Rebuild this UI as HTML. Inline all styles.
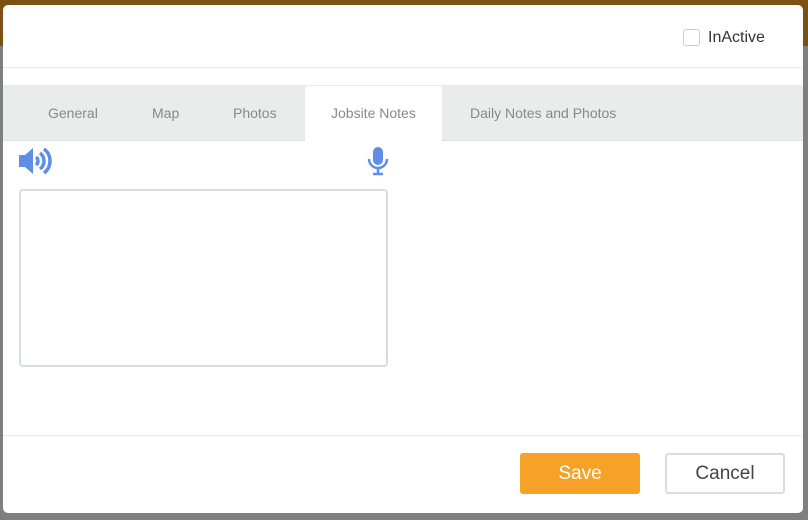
<!DOCTYPE html>
<html><head><style>
body{margin:0;width:808px;height:520px;background:#7f7f7f;position:relative;overflow:hidden;font-family:"Liberation Sans",sans-serif}
.top{position:absolute;left:0;top:0;width:808px;height:46px;background:#7d5114}
.m{position:absolute;left:3px;top:5px;width:800px;height:508px;background:#fff;border-radius:5px;overflow:hidden}
.hl{position:absolute;left:0;top:62px;width:800px;height:1px;background:#e6e8ea}
.cb{position:absolute;left:680px;top:24px;width:15px;height:15px;border:1px solid #c9ccd0;border-radius:3px}
.ia{position:absolute;left:705px;top:24px;font-size:16px;color:#333}
.tabs{position:absolute;left:0;top:80px;width:800px;height:55px;background:#eaeceb;border-bottom:1px solid #dfe1e3}
.t{position:absolute;top:20px;font-size:14px;color:#888}
.act{position:absolute;left:302px;top:1px;width:137px;height:56px;background:#fff;border-radius:3px 3px 0 0}
.ta{position:absolute;left:16px;top:184px;width:365px;height:174px;border:2px solid #d8dbdf;border-radius:4px}
.fl{position:absolute;left:0;top:430px;width:800px;height:1px;background:#e6e8ea}
.save{position:absolute;left:517px;top:448px;width:120px;height:41px;background:#f6a229;border-radius:3px;color:#fff;font-size:19px;text-align:center;line-height:41px}
.can{position:absolute;left:662px;top:448px;width:116px;height:37px;border:2px solid #dadde0;border-radius:3px;color:#444;font-size:19px;text-align:center;line-height:37px}
</style></head><body>
<div class="top"></div>
<div class="m">
<div class="cb"></div><div class="ia">InActive</div>
<div class="hl"></div>
<div class="tabs">
<div class="act"></div>
<div class="t" style="left:45px">General</div>
<div class="t" style="left:149px">Map</div>
<div class="t" style="left:230px">Photos</div>
<div class="t" style="left:328px">Jobsite Notes</div>
<div class="t" style="left:467px">Daily Notes and Photos</div>
</div>
<svg style="position:absolute;left:15px;top:142px" width="34" height="28" viewBox="0 0 34 28"><path d="M1 8h6l8-7v26l-8-7H1z" fill="#5f8ee8"/><path d="M18 10a5 5 0 0 1 0 8M22 6a10 10 0 0 1 0 16M26 2a15 15 0 0 1 0 24" stroke="#5f8ee8" stroke-width="3.5" fill="none"/></svg>
<svg style="position:absolute;left:364px;top:141px" width="22" height="30" viewBox="0 0 22 30"><rect x="6" y="1" width="10" height="18" rx="5" fill="#5f8ee8"/><path d="M2 13a9 9 0 0 0 18 0M11 22v5M6 28h10" stroke="#5f8ee8" stroke-width="2.5" fill="none"/></svg>
<div class="ta"></div>
<div class="fl"></div>
<div class="save">Save</div>
<div class="can">Cancel</div>
</div>
</body></html>
